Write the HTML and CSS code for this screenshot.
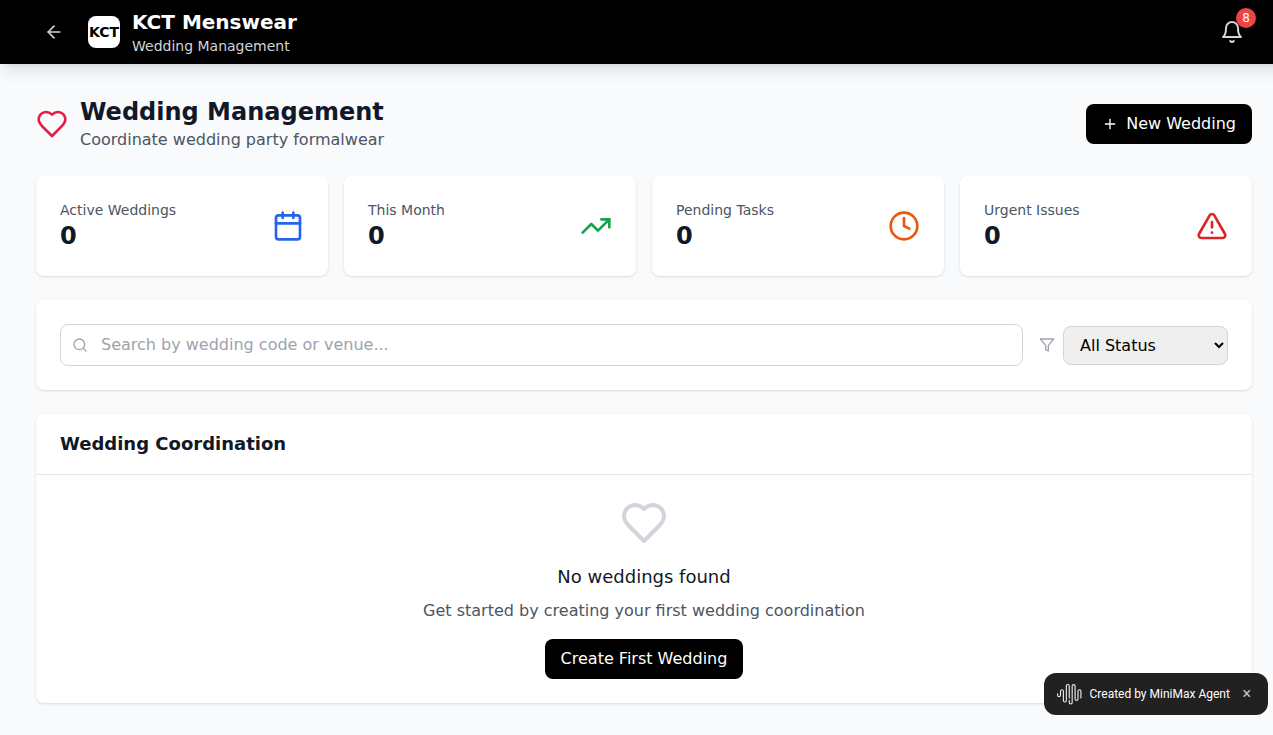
FILE: index.html
```html
<!DOCTYPE html>
<html lang="en">
<head>
<meta charset="utf-8">
<title>KCT Menswear - Wedding Management</title>
<link rel="stylesheet" href="styles.css">
</head>
<body>
<div class="page">
  <header class="topbar">
    <div class="brand">
      <button class="back" aria-label="Back"><svg class="icon i20" viewBox="0 0 24 24"><path d="m12 19-7-7 7-7"/><path d="M19 12H5"/></svg></button>
      <div class="logo">KCT</div>
      <div>
        <div class="brand-name">KCT Menswear</div>
        <div class="brand-sub">Wedding Management</div>
      </div>
    </div>
    <button class="bell" aria-label="Notifications">
      <svg class="icon i24" viewBox="0 0 24 24"><path d="M6 8a6 6 0 0 1 12 0c0 7 3 9 3 9H3s3-2 3-9"/><path d="M10.3 21a1.94 1.94 0 0 0 3.4 0"/></svg>
      <span class="badge">8</span>
    </button>
  </header>

  <main class="main">
    <section class="heading">
      <div class="heading-left">
        <svg class="icon i32 rose" viewBox="0 0 24 24"><path d="M19 14c1.49-1.46 3-3.21 3-5.5A5.5 5.5 0 0 0 16.5 3c-1.76 0-3 .5-4.5 2-1.5-1.5-2.74-2-4.5-2A5.5 5.5 0 0 0 2 8.5c0 2.3 1.5 4.05 3 5.5l7 7Z"/></svg>
        <div>
          <h1>Wedding Management</h1>
          <p class="muted">Coordinate wedding party formalwear</p>
        </div>
      </div>
      <button class="btn"><svg class="icon i16" viewBox="0 0 24 24"><path d="M5 12h14"/><path d="M12 5v14"/></svg>New Wedding</button>
    </section>

    <section class="stats">
      <div class="card stat">
        <div><p class="label">Active Weddings</p><p class="value">0</p></div>
        <svg class="icon i32 blue" viewBox="0 0 24 24"><path d="M8 2v4"/><path d="M16 2v4"/><rect width="18" height="18" x="3" y="4" rx="2"/><path d="M3 10h18"/></svg>
      </div>
      <div class="card stat">
        <div><p class="label">This Month</p><p class="value">0</p></div>
        <svg class="icon i32 green" viewBox="0 0 24 24"><polyline points="22 7 13.5 15.5 8.5 10.5 2 17"/><polyline points="16 7 22 7 22 13"/></svg>
      </div>
      <div class="card stat">
        <div><p class="label">Pending Tasks</p><p class="value">0</p></div>
        <svg class="icon i32 orange" viewBox="0 0 24 24"><circle cx="12" cy="12" r="10"/><polyline points="12 6 12 12 16 14"/></svg>
      </div>
      <div class="card stat">
        <div><p class="label">Urgent Issues</p><p class="value">0</p></div>
        <svg class="icon i32 red" viewBox="0 0 24 24"><path d="m21.73 18-8-14a2 2 0 0 0-3.48 0l-8 14A2 2 0 0 0 4 21h16a2 2 0 0 0 1.73-3"/><path d="M12 9v4"/><path d="M12 17h.01"/></svg>
      </div>
    </section>

    <section class="card filters">
      <label class="search">
        <svg class="icon i16" viewBox="0 0 24 24"><circle cx="11" cy="11" r="8"/><path d="m21 21-4.3-4.3"/></svg>
        <input type="text" placeholder="Search by wedding code or venue...">
      </label>
      <div class="status">
        <svg class="icon i16" viewBox="0 0 24 24"><polygon points="22 3 2 3 10 12.46 10 19 14 21 14 12.46 22 3"/></svg>
        <select><option>All Status</option></select>
      </div>
    </section>

    <section class="card list">
      <h2>Wedding Coordination</h2>
      <div class="empty">
        <svg class="icon i48 pale" viewBox="0 0 24 24"><path d="M19 14c1.49-1.46 3-3.21 3-5.5A5.5 5.5 0 0 0 16.5 3c-1.76 0-3 .5-4.5 2-1.5-1.5-2.74-2-4.5-2A5.5 5.5 0 0 0 2 8.5c0 2.3 1.5 4.05 3 5.5l7 7Z"/></svg>
        <h3>No weddings found</h3>
        <p class="muted">Get started by creating your first wedding coordination</p>
        <button class="btn">Create First Wedding</button>
      </div>
    </section>
  </main>
</div>

<aside class="credit">
  <svg class="wave" viewBox="0 0 24 24"><path d="M11.43 3.92a.86.86 0 1 0-1.718 0v14.236a1.999 1.999 0 0 1-3.997 0V9.022a.86.86 0 1 0-1.718 0v3.87a1.999 1.999 0 0 1-3.997 0V11.49a.57.57 0 0 1 1.139 0v1.404a.86.86 0 0 0 1.719 0V9.022a1.999 1.999 0 0 1 3.997 0v9.134a.86.86 0 0 0 1.719 0V3.92a1.998 1.998 0 1 1 3.996 0v11.788a.57.57 0 1 1-1.139 0zm10.572 3.105a2 2 0 0 0-1.999 1.997v7.63a.86.86 0 0 1-1.718 0V3.923a1.999 1.999 0 0 0-3.997 0v16.16a.86.86 0 0 1-1.719 0V18.08a.57.57 0 1 0-1.138 0v2a1.998 1.998 0 0 0 3.996 0V3.92a.86.86 0 0 1 1.719 0v12.73a1.999 1.999 0 0 0 3.996 0V9.023a.86.86 0 1 1 1.72 0v6.686a.57.57 0 0 0 1.138 0V9.022a2 2 0 0 0-1.998-1.997"/></svg>
  <span>Created by MiniMax Agent</span>
  <span class="close">×</span>
</aside>
</body>
</html>
```
FILE: styles.css
```css
*, *::before, *::after { box-sizing: border-box; }
html { height: 100%; overflow: hidden; }
body {
  margin: 0;
  height: 100%;
  overflow: hidden;
  background: #f9fafb;
  color: #111827;
  font: 16px/24px "DejaVu Sans", sans-serif;
}
h1, h2, h3, p { margin: 0; }
button, input, select { font: inherit; }
button { border: 0; cursor: pointer; }

.page { width: 1288px; }
.icon { display: block; flex: none; fill: none; stroke: currentColor; stroke-width: 2; stroke-linecap: round; stroke-linejoin: round; }
.i16 { width: 16px; height: 16px; }
.i20 { width: 20px; height: 20px; }
.i24 { width: 24px; height: 24px; }
.i32 { width: 32px; height: 32px; }
.i48 { width: 48px; height: 48px; }
.rose { color: #e11d48; }
.blue { color: #2563eb; }
.green { color: #16a34a; }
.orange { color: #ea580c; }
.red { color: #dc2626; }
.pale { color: #d1d5db; }
.muted { color: #4b5563; }

.topbar {
  height: 64px;
  padding: 0 36px;
  display: flex;
  align-items: center;
  justify-content: space-between;
  background: #000;
  color: #fff;
  box-shadow: 0 10px 15px -3px rgb(0 0 0 / .1), 0 4px 6px -4px rgb(0 0 0 / .1);
}
.brand { display: flex; align-items: center; }
.back { padding: 8px; margin-right: 16px; background: none; color: #d1d5db; }
.logo {
  width: 32px;
  height: 32px;
  margin-right: 12px;
  display: flex;
  align-items: center;
  justify-content: center;
  border-radius: 8px;
  background: #fff;
  color: #000;
  font-size: 14px;
  font-weight: 700;
}
.brand-name { font-size: 20px; line-height: 28px; font-weight: 700; }
.brand-sub { font-size: 14px; line-height: 20px; color: #d1d5db; }
.bell { position: relative; padding: 8px; background: none; color: #d1d5db; }
.badge {
  position: absolute;
  top: -4px;
  right: -4px;
  width: 20px;
  height: 20px;
  border-radius: 50%;
  background: #ef4444;
  color: #fff;
  font-size: 12px;
  line-height: 20px;
  text-align: center;
}

.main { padding: 32px 36px; display: flex; flex-direction: column; gap: 24px; }
.heading { display: flex; align-items: center; justify-content: space-between; }
.heading-left { display: flex; align-items: center; gap: 12px; }
h1 { font-size: 24px; line-height: 32px; font-weight: 700; }
.btn {
  display: flex;
  align-items: center;
  gap: 8px;
  padding: 8px 16px;
  border-radius: 8px;
  background: #000;
  color: #fff;
}
.card { background: #fff; border-radius: 8px; box-shadow: 0 1px 3px rgb(0 0 0 / .1), 0 1px 2px -1px rgb(0 0 0 / .1); }

.stats { display: grid; grid-template-columns: repeat(4, 1fr); gap: 16px; }
.stat { padding: 24px; display: flex; align-items: center; justify-content: space-between; }
.label { font-size: 14px; line-height: 20px; color: #4b5563; }
.value { font-size: 24px; line-height: 32px; font-weight: 700; }

.filters { padding: 24px; display: flex; align-items: center; gap: 16px; color: #9ca3af; }
.search {
  flex: 1;
  height: 42px;
  padding-left: 11px;
  display: flex;
  align-items: center;
  gap: 13px;
  border: 1px solid #d1d5db;
  border-radius: 8px;
}
.search input { flex: 1; border: 0; padding: 0; outline: 0; background: none; color: #111827; }
.search input::placeholder { color: #9ca3af; }
.status { display: flex; align-items: center; gap: 8px; }
.status select { width: 165px; height: 39px; padding: 8px 12px; border: 1px solid #d1d5db; border-radius: 8px; background: #efefef; color: #000; }

h2 { padding: 16px 24px; border-bottom: 1px solid #e5e7eb; font-size: 18px; line-height: 28px; font-weight: 700; }
.empty { padding: 24px; display: flex; flex-direction: column; align-items: center; }
h3 { margin: 16px 0 8px; font-size: 18px; line-height: 28px; font-weight: 400; }
.empty .btn { margin-top: 16px; }

.credit {
  position: fixed;
  right: 5px;
  bottom: 20px;
  width: 224px;
  height: 42px;
  padding: 0 17px 0 13px;
  display: flex;
  align-items: center;
  border-radius: 12px;
  background: #212121;
  color: #fff;
  font: 12px/18px Roboto, sans-serif;
}
.wave { width: 24.5px; height: 24.5px; margin-right: 8px; fill: #e8e8e8; }
.close { margin-left: auto; font-size: 16px; color: #c4c4c4; }
```
